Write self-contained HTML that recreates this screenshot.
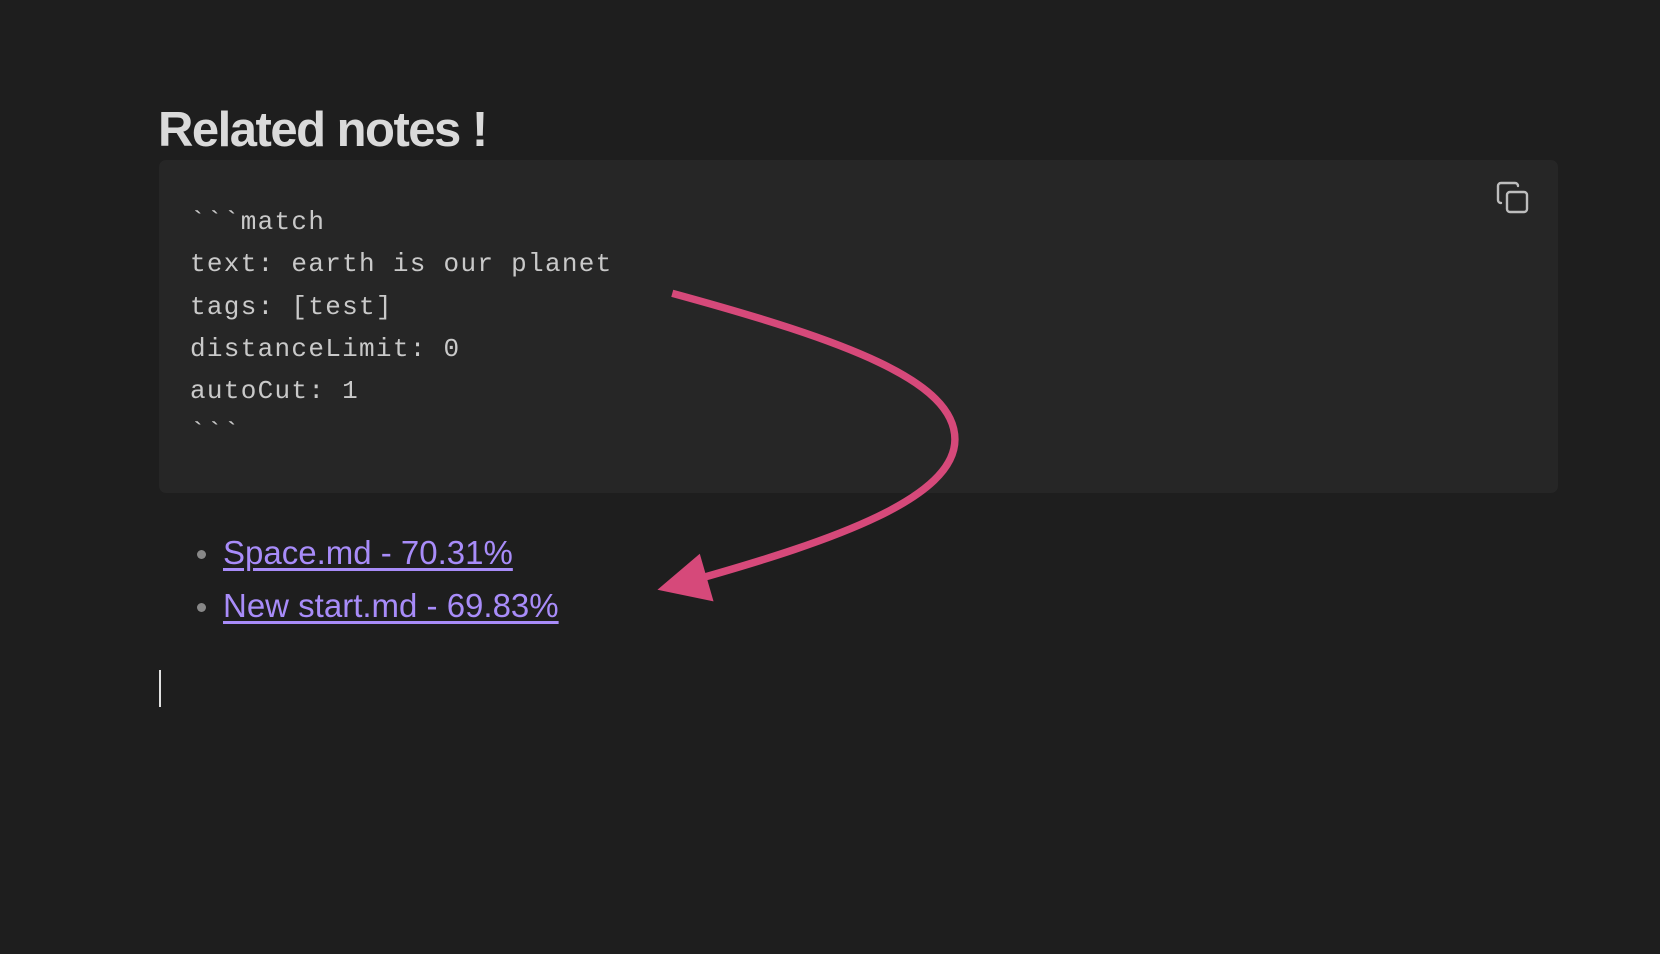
<!DOCTYPE html>
<html><head><meta charset="utf-8"><style>
html,body{margin:0;padding:0;background:#1e1e1e;width:1660px;height:954px;overflow:hidden;position:relative}
h1{position:absolute;left:158px;top:101px;margin:0;font:bold 49px/1.2 "Liberation Sans",sans-serif;color:#dadada;letter-spacing:-1.5px}
.code{position:absolute;left:159px;top:160px;width:1399px;height:333px;background:#262626;border-radius:7px}
.code pre{position:absolute;left:31px;top:41px;margin:0;font:26px/42.3px "Liberation Mono",monospace;letter-spacing:1.3px;color:#c9c9c9}
ul{position:absolute;left:0;top:0;margin:0;padding:0;list-style:none}
li{position:absolute;left:223px;font:33px "Liberation Sans",sans-serif;letter-spacing:0px;white-space:nowrap}
li a{color:#a88cf9;text-decoration:underline;text-decoration-thickness:3px;text-underline-offset:4px}
li::before{content:"";position:absolute;left:-26px;top:16px;width:9px;height:9px;border-radius:50%;background:#888}
.cursor{position:absolute;left:159px;top:670px;width:2px;height:37px;background:#e0e0e0}
svg{position:absolute;left:0;top:0}
</style></head><body>
<h1>Related notes !</h1>
<div class="code"><pre>&#96;&#96;&#96;match
text: earth is our planet
tags: [test]
distanceLimit: 0
autoCut: 1
&#96;&#96;&#96;</pre>
<svg style="left:1337px;top:21px" width="34" height="34" viewBox="0 0 34 34" fill="none" stroke="#bdbdbd" stroke-width="2.4" stroke-linecap="round" stroke-linejoin="round"><rect x="11" y="11" width="20" height="20" rx="3"/><path d="M5 22c-1.7 0-3-1.3-3-3V5c0-1.7 1.3-3 3-3h14c1.7 0 3 1.3 3 3"/></svg>
</div>
<ul>
<li style="top:534px"><a>Space.md - 70.31%</a></li>
<li style="top:587px"><a>New start.md - 69.83%</a></li>
</ul>
<div class="cursor"></div>
<svg width="1660" height="954" viewBox="0 0 1568 901" preserveAspectRatio="none">
<path d="M635 277 C 800 322, 902 360, 902 415 C 902 470, 790 510, 655 548" fill="none" stroke="#d6497a" stroke-width="7"/>
<polygon points="621,557 661,523 674,568" fill="#d6497a"/>
</svg>
</body></html>
